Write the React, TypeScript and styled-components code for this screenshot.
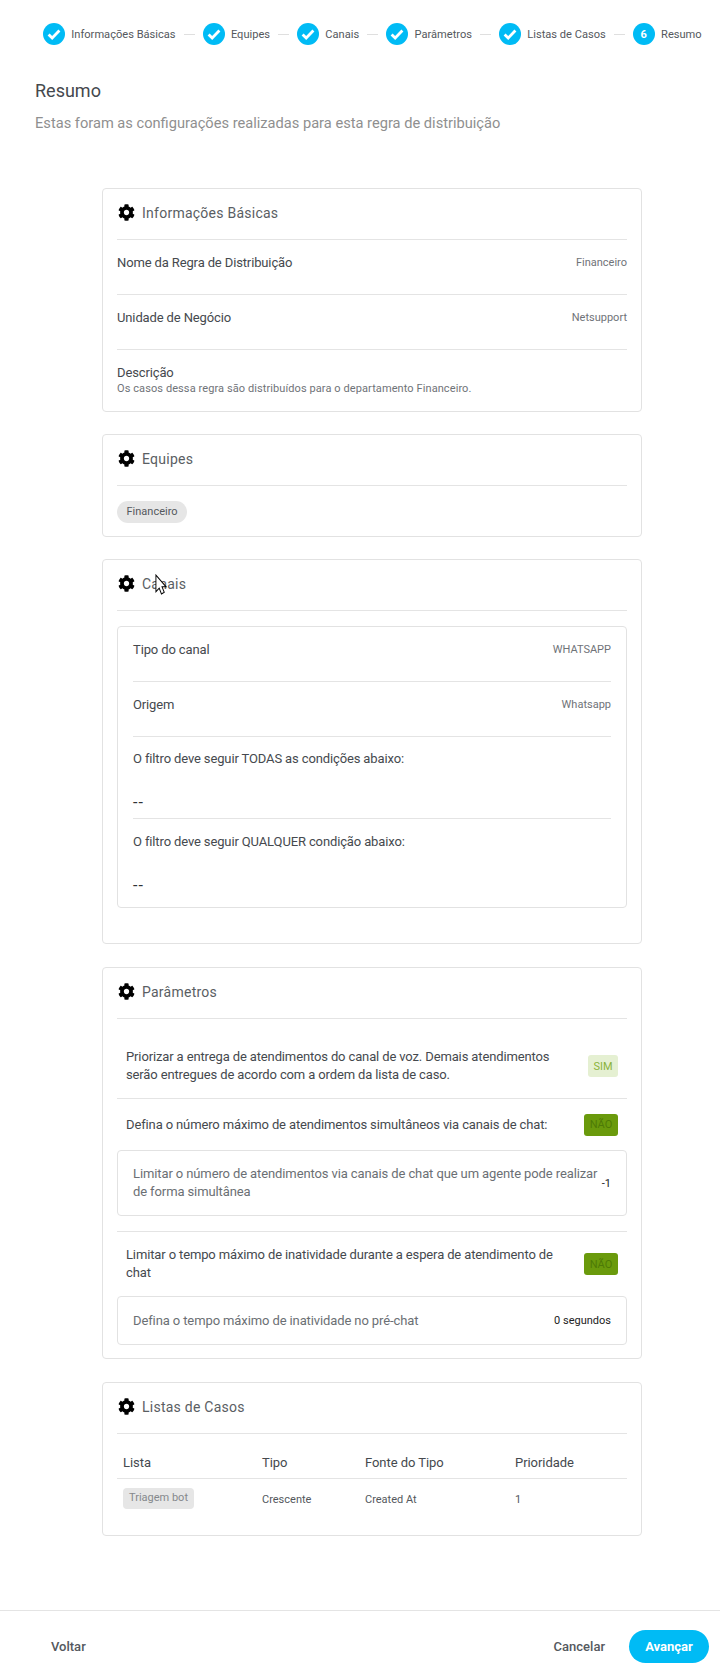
import { Fragment } from "react";
import styled, { createGlobalStyle } from "styled-components";

const GlobalStyle = createGlobalStyle`
  html, body {
    margin: 0;
    padding: 0;
    background: #fff;
  }
  * {
    box-sizing: border-box;
  }
  body {
    font-family: Roboto, "Liberation Sans", sans-serif;
    color: #4b4f54;
  }
`;

const Page = styled.div`
  position: relative;
  width: 720px;
  height: 1675px;
  background: #fff;
  overflow: hidden;
`;

const Stepper = styled.div`
  display: flex;
  align-items: center;
  height: 22px;
  margin-top: 23px;
  padding-left: 43px;
`;

const Step = styled.div`
  display: flex;
  align-items: center;
  gap: 6.3px;
  font-size: 11.1px;
  color: #54585d;
  white-space: nowrap;
`;

const StepCircle = styled.span`
  display: flex;
  align-items: center;
  justify-content: center;
  width: 22px;
  height: 22px;
  border-radius: 50%;
  background: #00bbf5;
  color: #fff;
  font-size: 11px;
  font-weight: 700;
`;

const StepLine = styled.span`
  width: 11px;
  height: 1px;
  margin: 0 8px;
  background: #dfdfdf;
`;

const Heading = styled.div`
  padding: 0 0 0 35px;
  margin-top: 35px;
`;

const Title = styled.h1`
  margin: 0;
  font-size: 18px;
  line-height: 22px;
  font-weight: 400;
  color: #44484d;
`;

const Subtitle = styled.p`
  margin: 10px 0 0;
  font-size: 14.65px;
  line-height: 22px;
  color: #8f8f8f;
`;

const Cards = styled.div`
  display: flex;
  flex-direction: column;
  width: 540px;
  margin: 54px 0 0 102px;
`;

const Card = styled.section<{ $height: number; $after?: number }>`
  height: ${(p) => p.$height}px;
  margin-bottom: ${(p) => p.$after ?? 22}px;
  padding: 0 14px;
  border: 1px solid #e2e2e2;
  border-radius: 4px;
`;

const CardHeader = styled.div`
  display: flex;
  align-items: center;
  gap: 7px;
  height: 51px;
  padding: 0 0 2px 1px;
  border-bottom: 1px solid #e4e4e4;
  font-size: 14px;
  letter-spacing: 0.25px;
  color: #5a5e63;

  svg {
    margin-top: -1px;
  }
`;

const Row = styled.div<{ $noBorder?: boolean }>`
  display: flex;
  justify-content: space-between;
  height: 55px;
  padding-top: 14px;
  border-bottom: ${(p) => (p.$noBorder ? "none" : "1px solid #e4e4e4")};
`;

const RowLabel = styled.span`
  display: block;
  font-size: 13px;
  line-height: 18px;
  font-weight: 450;
  letter-spacing: -0.13px;
  color: #45494e;
`;

const RowValue = styled.span`
  font-size: 11px;
  line-height: 18px;
  color: #6f7378;
`;

const SubText = styled.div`
  font-size: 11px;
  line-height: 13px;
  letter-spacing: 0.09px;
  color: #6f7378;
`;

const ChipRow = styled.div`
  padding-top: 14px;
`;

const Chip = styled.span`
  display: inline-flex;
  align-items: center;
  height: 22px;
  padding: 0 9.5px;
  border-radius: 11px;
  background: #e6e6e6;
  font-size: 11px;
  color: #54585d;
`;

const InnerBox = styled.div<{ $top?: number }>`
  margin-top: ${(p) => p.$top ?? 0}px;
  padding: 0 15px;
  border: 1px solid #e2e2e2;
  border-radius: 4px;
`;

const FilterBlock = styled.div<{ $height: number; $top: number; $noBorder?: boolean }>`
  height: ${(p) => p.$height}px;
  padding-top: ${(p) => p.$top}px;
  border-bottom: ${(p) => (p.$noBorder ? "none" : "1px solid #e4e4e4")};
`;

const Dash = styled.div`
  margin-top: 27px;
  font-size: 16px;
  line-height: 16px;
  letter-spacing: 1px;
  color: #2f3336;
`;

const ParamRow = styled.div<{ $height: number; $top?: number; $border?: boolean }>`
  display: flex;
  align-items: center;
  justify-content: space-between;
  height: ${(p) => p.$height}px;
  padding: ${(p) => p.$top ?? 0}px 9px 0;
  border-bottom: ${(p) => (p.$border ? "1px solid #e4e4e4" : "none")};
`;

const ParamText = styled.span`
  max-width: 440px;
  font-size: 13px;
  line-height: 18px;
  font-weight: 450;
  letter-spacing: -0.13px;
  color: #45494e;
`;

const Badge = styled.span<{ $on?: boolean }>`
  display: flex;
  align-items: center;
  justify-content: center;
  flex: none;
  width: ${(p) => (p.$on ? 30 : 34)}px;
  height: 22px;
  border-radius: 3px;
  font-size: 11px;
  background: ${(p) => (p.$on ? "#e5f0d2" : "#6a9a0c")};
  color: ${(p) => (p.$on ? "#8ab33a" : "#4e7a06")};
`;

const NestedBody = styled.div<{ $height: number }>`
  display: flex;
  align-items: center;
  justify-content: space-between;
  height: ${(p) => p.$height}px;
`;

const NestedText = styled.span`
  max-width: 470px;
  font-size: 13px;
  line-height: 18px;
  letter-spacing: -0.11px;
  color: #6b6f74;
`;

const NestedValue = styled.span`
  font-size: 11px;
  color: #222;
  white-space: nowrap;
`;

const ParamDivider = styled.div`
  height: 1px;
  margin-top: 15px;
  background: #e4e4e4;
`;

const CaseTable = styled.div`
  display: grid;
  grid-template-columns: 139px 103px 150px 1fr;
`;

const HeadCell = styled.div`
  height: 45px;
  padding: 21px 0 0 6px;
  border-bottom: 1px solid #e4e4e4;
  font-size: 13px;
  line-height: 16px;
  font-weight: 450;
  letter-spacing: -0.05px;
  color: #45494e;
`;

const BodyCell = styled.div`
  display: flex;
  align-items: center;
  height: 40px;
  padding-left: 6px;
  font-size: 11px;
  color: #54585d;
`;

const ListTag = styled.span`
  display: inline-block;
  height: 21px;
  margin-top: -2px;
  padding: 2px 6px 0;
  border-radius: 4px;
  background: #e6e6e6;
  font-size: 11px;
  line-height: 15px;
  color: #85888c;
`;

const Footer = styled.footer`
  position: absolute;
  left: 0;
  right: 0;
  bottom: 0;
  display: flex;
  align-items: center;
  justify-content: space-between;
  height: 65px;
  padding: 6px 11px 0 51px;
  border-top: 1px solid #e4e4e4;
`;

const FooterButton = styled.button`
  padding: 0;
  border: none;
  background: none;
  font-family: inherit;
  font-size: 13px;
  font-weight: 500;
  color: #54585d;
`;

const FooterRight = styled.div`
  display: flex;
  align-items: center;
  gap: 24px;
`;

const NextButton = styled.button`
  width: 80px;
  height: 33px;
  border: none;
  border-radius: 17px;
  background: #00bbf5;
  font-family: inherit;
  font-size: 13px;
  font-weight: 700;
  color: #fff;
`;

const Cursor = styled.svg`
  position: absolute;
  left: 155px;
  top: 574px;
`;

const CheckIcon = () => (
  <svg width="14" height="14" viewBox="0 0 14 14" fill="none">
    <path d="M1.6 7.4l3.6 3.6L12.4 3.6" stroke="#fff" strokeWidth="2.8" />
  </svg>
);

const GearIcon = () => (
  <svg width="17" height="17" viewBox="0 0 512 512" fill="#000">
    <path d="M487.4 315.7l-42.6-24.6c4.3-23.2 4.3-47 0-70.2l42.6-24.6c4.9-2.8 7.1-8.6 5.5-14-11.1-35.6-30-67.8-54.7-94.6-3.8-4.1-10-5.1-14.8-2.3L380.8 110c-17.9-15.4-38.5-27.3-60.8-35.1V25.8c0-5.6-3.9-10.5-9.4-11.7-36.7-8.2-74.3-7.8-109.2 0-5.5 1.2-9.4 6.1-9.4 11.7V75c-22.2 7.9-42.8 19.8-60.8 35.1L88.7 85.5c-4.9-2.8-11-1.9-14.8 2.3-24.7 26.7-43.6 58.9-54.7 94.6-1.7 5.4.6 11.2 5.5 14L67.3 221c-4.3 23.2-4.3 47 0 70.2l-42.6 24.6c-4.9 2.8-7.1 8.6-5.5 14 11.1 35.6 30 67.8 54.7 94.6 3.8 4.1 10 5.1 14.8 2.3l42.6-24.6c17.9 15.4 38.5 27.3 60.8 35.1v49.2c0 5.6 3.9 10.5 9.4 11.7 36.7 8.2 74.3 7.8 109.2 0 5.5-1.2 9.4-6.1 9.4-11.7v-49.2c22.2-7.9 42.8-19.8 60.8-35.1l42.6 24.6c4.9 2.8 11 1.9 14.8-2.3 24.7-26.7 43.6-58.9 54.7-94.6 1.5-5.5-.7-11.3-5.6-14.1zM256 336c-44.1 0-80-35.9-80-80s35.9-80 80-80 80 35.9 80 80-35.9 80-80 80z" />
  </svg>
);

const steps = ["Informações Básicas", "Equipes", "Canais", "Parâmetros", "Listas de Casos"];

const CardTitle = ({ children }: { children: string }) => (
  <CardHeader>
    <GearIcon />
    {children}
  </CardHeader>
);

export default function App() {
  return (
    <Page>
      <GlobalStyle />
      <Stepper>
        {steps.map((s) => (
          <Fragment key={s}>
            <Step>
              <StepCircle>
                <CheckIcon />
              </StepCircle>
              {s}
            </Step>
            <StepLine />
          </Fragment>
        ))}
        <Step>
          <StepCircle>6</StepCircle>
          Resumo
        </Step>
      </Stepper>

      <Heading>
        <Title>Resumo</Title>
        <Subtitle>Estas foram as configurações realizadas para esta regra de distribuição</Subtitle>
      </Heading>

      <Cards>
        <Card $height={224}>
          <CardTitle>Informações Básicas</CardTitle>
          <Row>
            <RowLabel>Nome da Regra de Distribuição</RowLabel>
            <RowValue>Financeiro</RowValue>
          </Row>
          <Row>
            <RowLabel>Unidade de Negócio</RowLabel>
            <RowValue>Netsupport</RowValue>
          </Row>
          <Row $noBorder>
            <div>
              <RowLabel>Descrição</RowLabel>
              <SubText>Os casos dessa regra são distribuídos para o departamento Financeiro.</SubText>
            </div>
          </Row>
        </Card>

        <Card $height={103}>
          <CardTitle>Equipes</CardTitle>
          <ChipRow>
            <Chip>Financeiro</Chip>
          </ChipRow>
        </Card>

        <Card $height={385} $after={23}>
          <CardTitle>Canais</CardTitle>
          <InnerBox $top={15}>
            <Row>
              <RowLabel>Tipo do canal</RowLabel>
              <RowValue>WHATSAPP</RowValue>
            </Row>
            <Row>
              <RowLabel>Origem</RowLabel>
              <RowValue>Whatsapp</RowValue>
            </Row>
            <FilterBlock $height={82} $top={13}>
              <RowLabel>O filtro deve seguir TODAS as condições abaixo:</RowLabel>
              <Dash>--</Dash>
            </FilterBlock>
            <FilterBlock $height={88} $top={14} $noBorder>
              <RowLabel>O filtro deve seguir QUALQUER condição abaixo:</RowLabel>
              <Dash>--</Dash>
            </FilterBlock>
          </InnerBox>
        </Card>

        <Card $height={392} $after={23}>
          <CardTitle>Parâmetros</CardTitle>
          <ParamRow $height={80} $top={15} $border>
            <ParamText>
              Priorizar a entrega de atendimentos do canal de voz. Demais atendimentos serão entregues de acordo com a
              ordem da lista de caso.
            </ParamText>
            <Badge $on>SIM</Badge>
          </ParamRow>
          <ParamRow $height={51}>
            <ParamText>Defina o número máximo de atendimentos simultâneos via canais de chat:</ParamText>
            <Badge>NÃO</Badge>
          </ParamRow>
          <InnerBox>
            <NestedBody $height={64}>
              <NestedText>
                Limitar o número de atendimentos via canais de chat que um agente pode realizar de forma simultânea
              </NestedText>
              <NestedValue>-1</NestedValue>
            </NestedBody>
          </InnerBox>
          <ParamDivider />
          <ParamRow $height={64}>
            <ParamText>Limitar o tempo máximo de inatividade durante a espera de atendimento de chat</ParamText>
            <Badge>NÃO</Badge>
          </ParamRow>
          <InnerBox>
            <NestedBody $height={47}>
              <NestedText>Defina o tempo máximo de inatividade no pré-chat</NestedText>
              <NestedValue>0 segundos</NestedValue>
            </NestedBody>
          </InnerBox>
        </Card>

        <Card $height={154}>
          <CardTitle>Listas de Casos</CardTitle>
          <CaseTable>
            <HeadCell>Lista</HeadCell>
            <HeadCell>Tipo</HeadCell>
            <HeadCell>Fonte do Tipo</HeadCell>
            <HeadCell>Prioridade</HeadCell>
            <BodyCell>
              <ListTag>Triagem bot</ListTag>
            </BodyCell>
            <BodyCell>Crescente</BodyCell>
            <BodyCell>Created At</BodyCell>
            <BodyCell>1</BodyCell>
          </CaseTable>
        </Card>
      </Cards>

      <Footer>
        <FooterButton>Voltar</FooterButton>
        <FooterRight>
          <FooterButton>Cancelar</FooterButton>
          <NextButton>Avançar</NextButton>
        </FooterRight>
      </Footer>

      <Cursor width="12" height="21" viewBox="0 0 13 19" preserveAspectRatio="none">
        <path d="M1 1v15l3.6-3.2L7 18l3-1.4-2.4-5H12z" fill="#fff" stroke="#000" strokeWidth="1" />
      </Cursor>
    </Page>
  );
}
